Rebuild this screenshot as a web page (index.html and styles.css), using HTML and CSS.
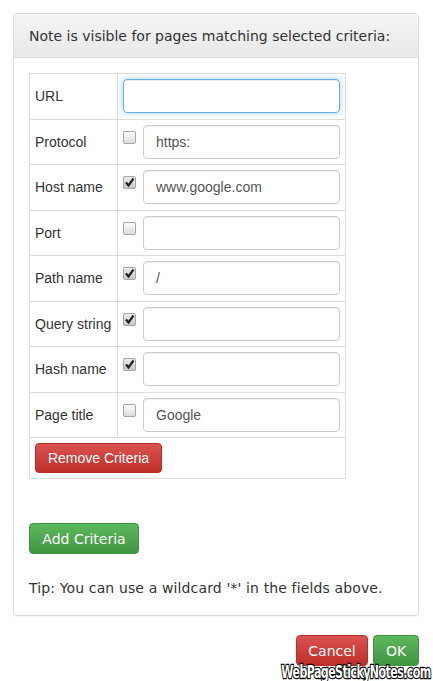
FILE: index.html
```html
<!DOCTYPE html>
<html>
<head>
<meta charset="utf-8">
<link rel="stylesheet" href="styles.css">
</head>
<body>
<div class="panel">
  <div class="panel-heading">Note is visible for pages matching selected criteria:</div>
  <div class="panel-body">
    <table class="criteria">
      <tr><td class="lbl">URL</td><td class="val"><div class="field"><div class="input focus"></div></div></td></tr>
      <tr><td class="lbl">Protocol</td><td class="val"><div class="field"><span class="cb"></span><div class="input">https:</div></div></td></tr>
      <tr><td class="lbl">Host name</td><td class="val"><div class="field"><span class="cb checked"><svg viewBox="0 0 13 13" width="13" height="13"><path d="M3 6.5 L5.5 9.5 L10.5 2.5" fill="none" stroke="#222" stroke-width="2.2"/></svg></span><div class="input">www.google.com</div></div></td></tr>
      <tr><td class="lbl">Port</td><td class="val"><div class="field"><span class="cb"></span><div class="input"></div></div></td></tr>
      <tr><td class="lbl">Path name</td><td class="val"><div class="field"><span class="cb checked"><svg viewBox="0 0 13 13" width="13" height="13"><path d="M3 6.5 L5.5 9.5 L10.5 2.5" fill="none" stroke="#222" stroke-width="2.2"/></svg></span><div class="input">/</div></div></td></tr>
      <tr><td class="lbl">Query string</td><td class="val"><div class="field"><span class="cb checked"><svg viewBox="0 0 13 13" width="13" height="13"><path d="M3 6.5 L5.5 9.5 L10.5 2.5" fill="none" stroke="#222" stroke-width="2.2"/></svg></span><div class="input"></div></div></td></tr>
      <tr><td class="lbl">Hash name</td><td class="val"><div class="field"><span class="cb checked"><svg viewBox="0 0 13 13" width="13" height="13"><path d="M3 6.5 L5.5 9.5 L10.5 2.5" fill="none" stroke="#222" stroke-width="2.2"/></svg></span><div class="input"></div></div></td></tr>
      <tr><td class="lbl">Page title</td><td class="val"><div class="field"><span class="cb"></span><div class="input">Google</div></div></td></tr>
      <tr><td colspan="2" class="btncell"><button class="btn btn-danger arial">Remove Criteria</button></td></tr>
    </table>
    <button class="btn btn-success add">Add Criteria</button>
    <p class="tip">Tip: You can use a wildcard '*' in the fields above.</p>
  </div>
</div>
<div class="footer">
  <button class="btn btn-danger">Cancel</button>
  <button class="btn btn-success">OK</button>
</div>
<div class="watermark">WebPageStickyNotes.com</div>
</body>
</html>
```
FILE: styles.css
```css
* { box-sizing: border-box; }
html, body { margin: 0; padding: 0; }
body {
  background: #fff;
  padding: 13px 14px 0 13px;
  font-family: "DejaVu Sans", sans-serif;
  font-size: 14px;
  color: #333;
  width: 433px;
  height: 681px;
  position: relative;
  overflow: hidden;
}
.panel {
  width: 406px;
  border: 1px solid #ddd;
  border-radius: 4px;
  box-shadow: 0 1px 2px rgba(0,0,0,0.05);
}
.panel-heading {
  height: 44px;
  padding: 0 15px;
  display: flex;
  align-items: center;
  background: linear-gradient(#f5f5f5, #e8e8e8);
  border-bottom: 1px solid #ddd;
  border-radius: 3px 3px 0 0;
  line-height: 1;
}
.panel-body {
  padding: 15px 15px 18px 15px;
}
.criteria {
  border-collapse: collapse;
  width: 317px;
  font-family: "Liberation Sans", Arial, sans-serif;
  font-size: 14px;
}
.criteria td {
  border: 1px solid #ddd;
  padding: 5px;
  vertical-align: middle;
}
.criteria td.lbl {
  width: 88px;
  padding-top: 0;
  padding-bottom: 0;
}
.field {
  display: flex;
  align-items: center;
  gap: 7px;
  height: 34.5px;
}
.cb {
  flex: none;
  align-self: flex-start;
  width: 13px;
  height: 13px;
  margin-top: 6px;
  border: 1px solid #a6a6a6;
  border-radius: 2px;
  background: linear-gradient(#fcfcfc, #dcdcdc);
  position: relative;
}
.cb svg { position: absolute; left: -1px; top: -1px; }
.cb.checked { background: linear-gradient(#ececec, #c8c8c8); }
.input {
  flex: 1;
  height: 34px;
  border: 1px solid #ccc;
  border-radius: 4px;
  padding: 0 12px;
  display: flex;
  align-items: center;
  color: #555;
  box-shadow: inset 0 1px 1px rgba(0,0,0,0.075);
}
.input.focus {
  border-color: #66afe9;
  box-shadow: inset 0 1px 1px rgba(0,0,0,.075), 0 0 6px rgba(102,175,233,.6);
}
.criteria td.btncell { padding: 5px; }
.btn {
  font-family: "DejaVu Sans", sans-serif;
  font-size: 14px;
  color: #fff;
  border-radius: 4px;
  border: 1px solid transparent;
  padding: 0 12px;
  line-height: 1;
  white-space: nowrap;
  cursor: pointer;
}
.btn.arial { font-family: "Liberation Sans", Arial, sans-serif; }
.btn-danger {
  background: linear-gradient(#d9534f, #c12e2a);
  border-color: #b92c28;
}
.btn-success {
  background: linear-gradient(#5cb85c, #419641);
  border-color: #3e8f3e;
}
.criteria .btn { height: 30px; width: 127px; padding: 0; display: block; }
.add {
  margin-top: 44px;
  height: 31px;
  width: 110px;
  padding: 0;
  display: block;
}
.tip {
  margin: 26px 0 0 0;
  line-height: 17px;
  letter-spacing: 0.13px;
}
.footer {
  width: 406px;
  display: flex;
  justify-content: flex-end;
  gap: 5px;
  margin-top: 19px;
}
.footer .btn { height: 31px; }
.footer .btn-danger { width: 72px; padding: 0; }
.footer .btn-success { width: 46px; padding: 0; }
.watermark {
  position: absolute;
  right: 2px;
  bottom: 1px;
  font-family: "DejaVu Sans Condensed", "DejaVu Sans", sans-serif;
  font-weight: bold;
  font-size: 18px;
  letter-spacing: -0.8px;
  color: #fff;
  -webkit-text-stroke: 2.4px #000;
  paint-order: stroke fill;
  transform: scaleX(0.68);
  transform-origin: right bottom;
  line-height: 16px;
}
```
